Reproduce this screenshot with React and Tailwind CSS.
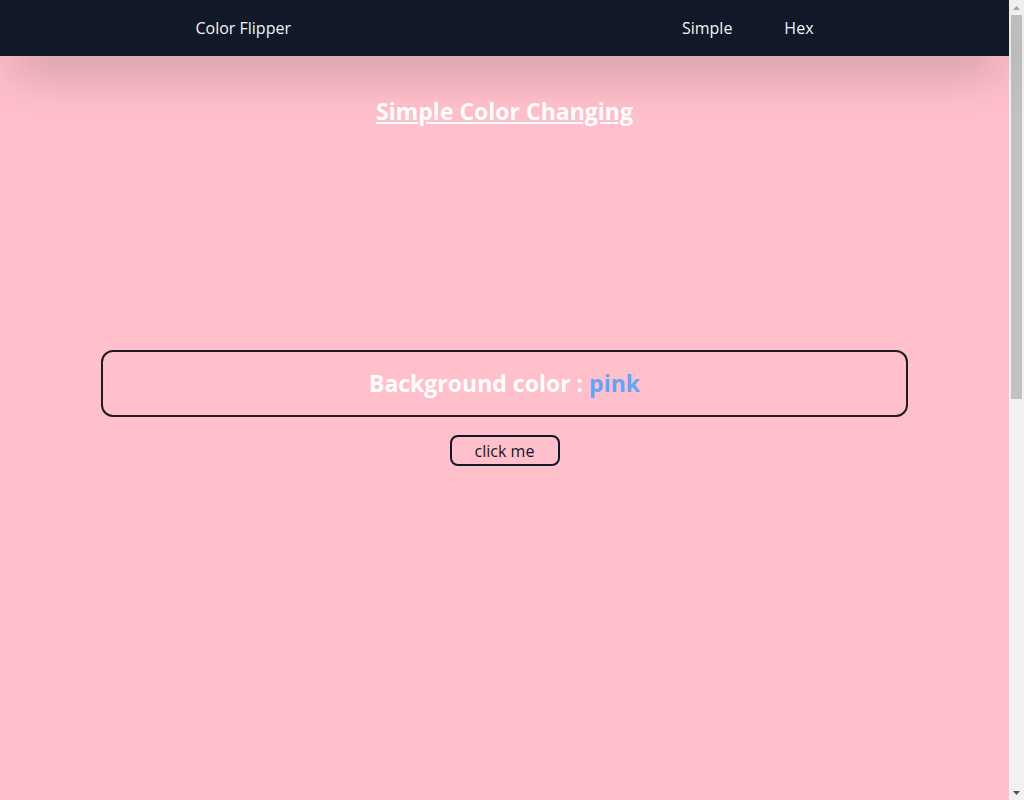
export default function App() {
  const font = { fontFamily: '"Open Sans", "Noto Sans", sans-serif' };
  return (
    <div className="flex h-screen overflow-hidden bg-[#ffc0cb]" style={font}>
      <div className="min-h-[1600px] w-[1009px] shrink-0">
        <nav className="relative z-10 flex h-14 items-center justify-around bg-[#111827] text-[#f3f4f6] shadow-2xl">
          <div className="text-base">Color Flipper</div>
          <div className="flex gap-[52px] text-base">
            <a>Simple</a>
            <a>Hex</a>
          </div>
        </nav>
        <main className="flex flex-col items-center">
          <h1 className="mt-[39px] text-[23px] font-bold leading-8 text-white underline">Simple Color Changing</h1>
          <div className="mt-[223px] flex h-[67px] w-4/5 items-center justify-center rounded-xl border-2 border-[#1c1c24]">
            <h2 className="text-[23px] font-bold text-white">
              Background color : <span className="text-[#60a5fa]">pink</span>
            </h2>
          </div>
          <button className="mt-[18px] h-[31px] w-[110px] rounded-lg border-2 border-[#111827] text-base text-[#111827]">
            click me
          </button>
        </main>
      </div>
      <aside className="flex h-screen w-[15px] shrink-0 flex-col bg-[#f1f1f1]">
        <div className="flex h-[15px] items-center justify-center">
          <svg width="7" height="4" viewBox="0 0 7 4">
            <polygon points="3.5,0 7,4 0,4" fill="#a3a3a3" />
          </svg>
        </div>
        <div className="mx-[2px] h-[384px] bg-[#c1c1c1]" />
        <div className="flex-1" />
        <div className="flex h-[15px] items-center justify-center">
          <svg width="7" height="4" viewBox="0 0 7 4">
            <polygon points="0,0 7,0 3.5,4" fill="#505050" />
          </svg>
        </div>
      </aside>
    </div>
  );
}
